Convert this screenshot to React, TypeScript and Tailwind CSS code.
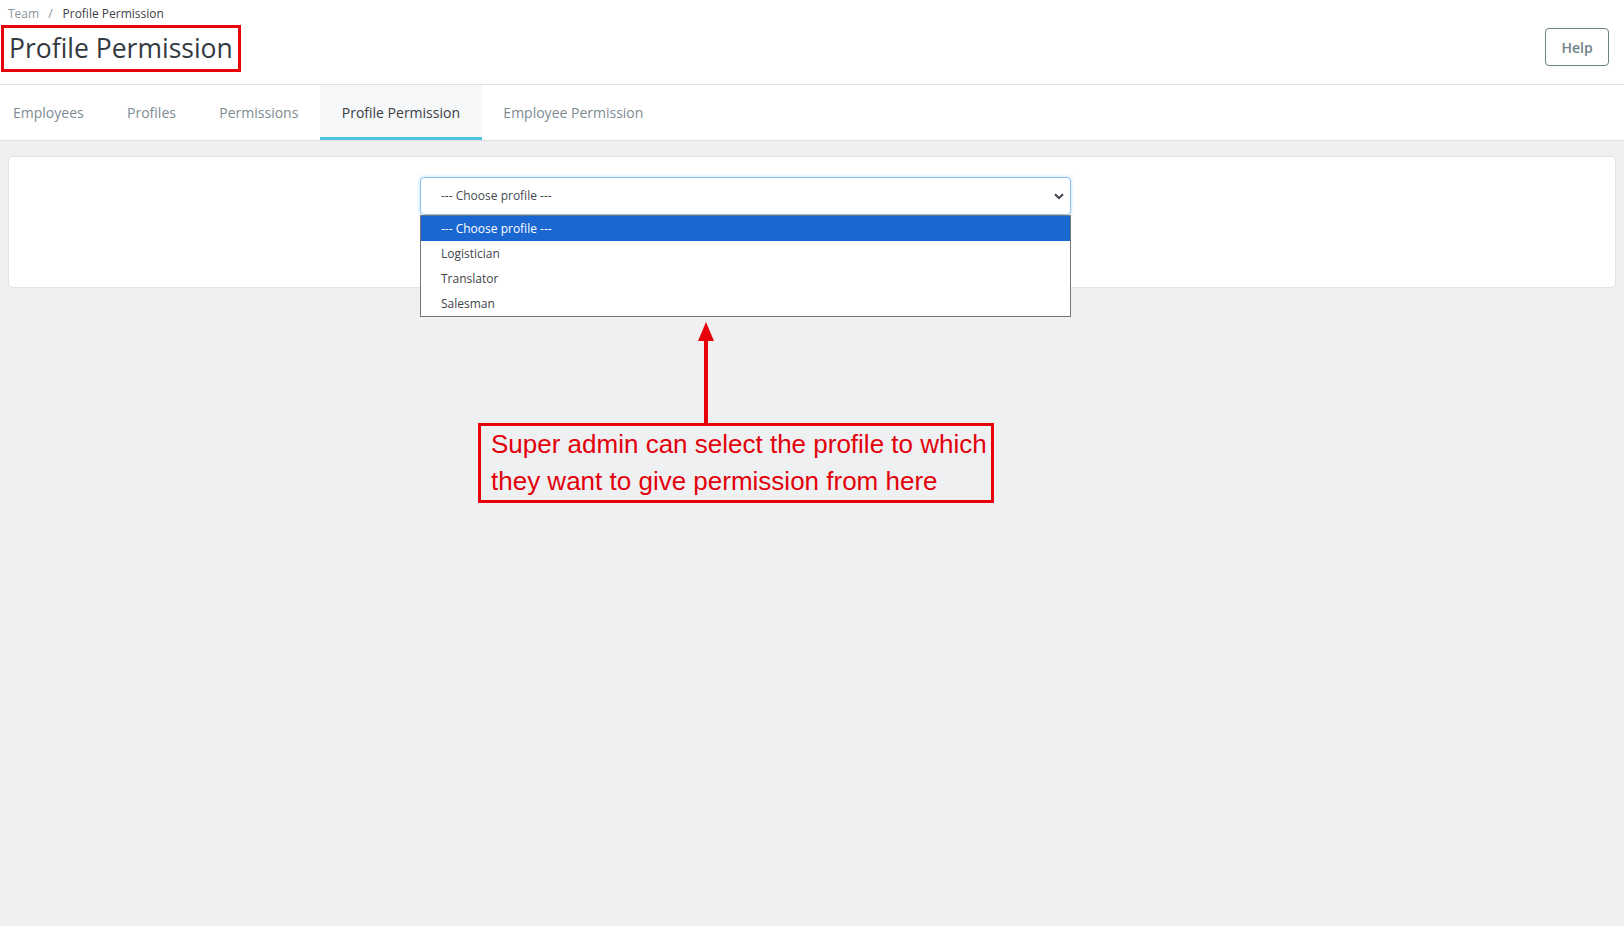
function Chevron() {
  return (
    <svg width="10" height="7" viewBox="0 0 10 7" className="shrink-0">
      <path d="M1 1.2 L5 5.2 L9 1.2" fill="none" stroke="#3d4348" strokeWidth="2" />
    </svg>
  );
}

function Arrow() {
  return (
    <svg width="16" height="101" viewBox="0 0 16 101" className="ml-[220px] block">
      <polygon points="8,0 0,19 16,19" fill="#e8000b" />
      <rect x="6" y="18" width="4" height="83" fill="#e8000b" />
    </svg>
  );
}

const tabs = ["Employees", "Profiles", "Permissions", "Profile Permission", "Employee Permission"];
const options = ["--- Choose profile ---", "Logistician", "Translator", "Salesman"];

export default function App() {
  return (
    <div className="min-h-screen w-full bg-[#eef0f2] font-['Open_Sans',sans-serif]">
      <header className="h-[85px] bg-white border-b border-[#dfe2e5] flex justify-between items-start">
        <div>
          <div className="pl-[8px] pt-[6px] h-[22px] text-[12px] leading-[16px] flex">
            <span className="text-[#8b949a]">Team</span>
            <span className="text-[#8b949a] ml-[9px] mr-[10px]">/</span>
            <span className="text-[#3c4146]">Profile Permission</span>
          </div>
          <h1 className="ml-[1px] mt-[3px] inline-block border-[3px] border-[#e8000b] px-[5px] text-[26.5px] leading-[41px] text-[#343a40] font-normal">
            Profile Permission
          </h1>
        </div>
        <button className="mt-[28px] mr-[15px] w-[64px] h-[38px] border border-[#6f8288] rounded-[4px] text-[14px] font-semibold text-[#6f8288] bg-white">
          Help
        </button>
      </header>

      <nav className="h-[56px] bg-white border-b border-[#dcdfe2] flex">
        {tabs.map((t, i) => {
          const active = t === "Profile Permission";
          return (
            <div
              key={t}
              className={
                active
                  ? "h-full px-[21.7px] flex items-center text-[14px] text-[#3a3f44] bg-[#f5f7f9] border-b-[3px] border-[#4ec5de] pt-[3px]"
                  : i === 0
                  ? "h-full pl-[13px] pr-[21.7px] flex items-center text-[14px] text-[#7d8b92]"
                  : "h-full px-[21.7px] flex items-center text-[14px] text-[#7d8b92]"
              }
            >
              {t}
            </div>
          );
        })}
      </nav>

      <main className="pt-[15px] px-[8px]">
        <div className="h-[132px] bg-white border border-[#e2e5e8] rounded-[4px] pt-[20px]">
          <div className="relative ml-[411px] w-[651px]">
            <div className="h-[38px] border border-[#8dc1ee] rounded-[4px] shadow-[0_0_3px_1px_rgba(128,189,255,0.35)] flex items-center justify-between pl-[20px] pr-[6px] text-[12px] text-[#444a50] bg-white">
              <span>--- Choose profile ---</span>
              <Chevron />
            </div>
            <ul className="absolute left-0 top-full w-full bg-white border border-[#767676] z-10">
              {options.map((o, i) => (
                <li
                  key={o}
                  className={
                    i === 0
                      ? "h-[25px] flex items-center pl-[20px] text-[12px] bg-[#1a67d2] text-white"
                      : "h-[25px] flex items-center pl-[20px] text-[12px] text-[#3d4348]"
                  }
                >
                  {o}
                </li>
              ))}
            </ul>
          </div>
        </div>

        <div className="ml-[470px] mt-[34px] w-[516px]">
          <Arrow />
          <div className="h-[80px] border-[3px] border-[#e8000b] pl-[10px] text-[26px] leading-[37px] text-[#e3000b] font-['Liberation_Sans',Arial,sans-serif]">
            Super admin can select the profile to which
            <br />
            they want to give permission from here
          </div>
        </div>
      </main>
    </div>
  );
}
